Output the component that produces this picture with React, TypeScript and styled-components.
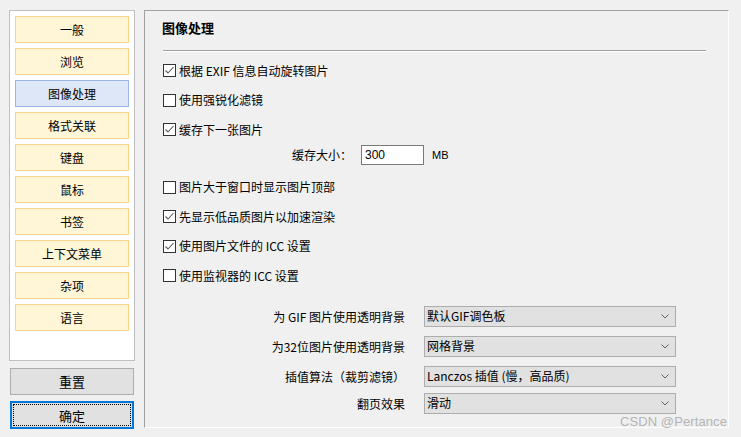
import React from "react";
import styled, { createGlobalStyle } from "styled-components";

const Global = createGlobalStyle`
  html, body { margin: 0; padding: 0; background: #f0f0f0; }
  body { font-family: "Noto Sans CJK SC", "Liberation Sans", sans-serif; font-size: 12px; color: #000; }
  * { box-sizing: border-box; }
`;

const Page = styled.div`
  position: relative;
  width: 741px;
  height: 437px;
  display: flex;
  align-items: flex-start;
  padding: 10px 0 0 9px;
  background: #f0f0f0;
`;

const LeftCol = styled.div`
  width: 126px;
  display: flex;
  flex-direction: column;
`;

const NavPanel = styled.div`
  height: 351px;
  background: #fff;
  border: 1px solid #bfbfbf;
  padding: 5px;
  display: flex;
  flex-direction: column;
  gap: 5px;
`;

const NavButton = styled.div<{ $active?: boolean }>`
  height: 27px;
  display: flex;
  align-items: center;
  justify-content: center;
  font-size: 12px;
  line-height: 1;
  background: ${(p) => (p.$active ? "#dde7f7" : "#fff6d7")};
  border: 1px solid ${(p) => (p.$active ? "#98b6e4" : "#ffd487")};
`;

const ActionButton = styled.div<{ $focused?: boolean }>`
  position: relative;
  margin: ${(p) => (p.$focused ? "6px" : "7px")} 0 0 1px;
  width: 124px;
  height: ${(p) => (p.$focused ? "28px" : "27px")};
  display: flex;
  align-items: center;
  justify-content: center;
  font-size: 13px;
  line-height: 1;
  background: #e1e1e1;
  border: ${(p) => (p.$focused ? "2px solid #0078d7" : "1px solid #adadad")};
  &::after {
    content: "";
    display: ${(p) => (p.$focused ? "block" : "none")};
    position: absolute;
    inset: 1px;
    border: 1px dotted #000;
  }
`;

const RightPanel = styled.div`
  margin-left: 9px;
  width: 585px;
  height: 418px;
  border-top: 1px solid #a0a0a0;
  border-left: 1px solid #a0a0a0;
  border-right: 1px solid #fff;
  border-bottom: 1px solid #fff;
  padding: 8px 0 0 17px;
  display: flex;
  flex-direction: column;
`;

const Heading = styled.div`
  font-size: 13px;
  font-weight: bold;
  line-height: 18px;
  height: 18px;
`;

const Separator = styled.div`
  margin: 13px 0 0 1px;
  width: 543px;
  height: 2px;
  border-top: 1px solid #a0a0a0;
  border-bottom: 1px solid #fff;
`;

const Options = styled.div`
  margin-top: 4px;
  display: flex;
  flex-direction: column;
`;

const CheckRow = styled.label`
  height: 29.5px;
  display: flex;
  align-items: center;
  gap: 3px;
  padding-left: 1px;
  font-size: 12px;
  line-height: 1;
  white-space: nowrap;
`;

const Box = styled.span`
  width: 13px;
  height: 13px;
  border: 1px solid #333;
  background: #fff;
  display: flex;
  align-items: center;
  justify-content: center;
`;

const CacheRow = styled.div`
  height: 28px;
  display: flex;
  align-items: flex-start;
  padding-left: 130px;
  font-size: 12px;
`;

const CacheLabel = styled.span`
  width: 69px;
  height: 20px;
  line-height: 20px;
`;

const NumberInput = styled.div`
  width: 63px;
  height: 20px;
  border: 1px solid #7a7a7a;
  background: #fff;
  padding-left: 3px;
  line-height: 18px;
  font-size: 12px;
  font-family: "Liberation Sans", sans-serif;
`;

const Unit = styled.span`
  margin-left: 8px;
  height: 20px;
  line-height: 20px;
  font-size: 11px;
  font-family: "Liberation Sans", sans-serif;
`;

const SelectGrid = styled.div`
  margin-top: 15px;
  display: grid;
  grid-template-columns: 243px 252px;
  column-gap: 19px;
`;

const SelectLabel = styled.div<{ $gap: number }>`
  margin-top: ${(p) => p.$gap}px;
  height: 21px;
  line-height: 21px;
  text-align: right;
  font-size: 12px;
  white-space: nowrap;
`;

const Select = styled.div<{ $gap: number }>`
  margin-top: ${(p) => p.$gap}px;
  height: 21px;
  background: #e1e1e1;
  border: 1px solid #adadad;
  display: flex;
  align-items: center;
  justify-content: space-between;
  padding: 0 6px 0 2px;
  font-size: 12px;
  line-height: 1;
  white-space: nowrap;
`;

const Watermark = styled.div`
  position: absolute;
  right: 14px;
  bottom: 8px;
  font-family: "Liberation Sans", sans-serif;
  font-size: 13px;
  color: #b4b4b4;
  letter-spacing: 0.1px;
`;

const Check = () => (
  <svg width="11" height="11" viewBox="0 0 11 11">
    <polyline points="1.5,5.5 4,8 9.5,2" fill="none" stroke="#5a5a5a" strokeWidth="1.1" />
  </svg>
);

const Chevron = () => (
  <svg width="8" height="5" viewBox="0 0 8 5">
    <polyline points="0.5,0.5 4,4 7.5,0.5" fill="none" stroke="#606060" strokeWidth="1" />
  </svg>
);

const navItems = ["一般", "浏览", "图像处理", "格式关联", "键盘", "鼠标", "书签", "上下文菜单", "杂项", "语言"];

const CheckOption = ({ checked, label }: { checked: boolean; label: string }) => (
  <CheckRow>
    <Box>{checked && <Check />}</Box>
    <span>{label}</span>
  </CheckRow>
);

const selects = [
  { label: "为 GIF 图片使用透明背景", value: "默认GIF调色板", gap: 0 },
  { label: "为32位图片使用透明背景", value: "网格背景", gap: 9 },
  { label: "插值算法（裁剪滤镜）", value: "Lanczos 插值 (慢，高品质)", gap: 9 },
  { label: "翻页效果", value: "滑动", gap: 6 },
];

export default function App() {
  return (
    <>
      <Global />
      <Page>
        <LeftCol>
          <NavPanel>
            {navItems.map((n) => (
              <NavButton key={n} $active={n === "图像处理"}>
                {n}
              </NavButton>
            ))}
          </NavPanel>
          <ActionButton>重置</ActionButton>
          <ActionButton $focused>确定</ActionButton>
        </LeftCol>
        <RightPanel>
          <Heading>图像处理</Heading>
          <Separator />
          <Options>
            <CheckOption checked label="根据 EXIF 信息自动旋转图片" />
            <CheckOption checked={false} label="使用强锐化滤镜" />
            <CheckOption checked label="缓存下一张图片" />
            <CacheRow>
              <CacheLabel>缓存大小：</CacheLabel>
              <NumberInput>300</NumberInput>
              <Unit>MB</Unit>
            </CacheRow>
            <CheckOption checked={false} label="图片大于窗口时显示图片顶部" />
            <CheckOption checked label="先显示低品质图片以加速渲染" />
            <CheckOption checked label="使用图片文件的 ICC 设置" />
            <CheckOption checked={false} label="使用监视器的 ICC 设置" />
          </Options>
          <SelectGrid>
            {selects.map((s) => (
              <React.Fragment key={s.label}>
                <SelectLabel $gap={s.gap}>{s.label}</SelectLabel>
                <Select $gap={s.gap}>
                  <span>{s.value}</span>
                  <Chevron />
                </Select>
              </React.Fragment>
            ))}
          </SelectGrid>
        </RightPanel>
        <Watermark>CSDN @Pertance</Watermark>
      </Page>
    </>
  );
}
